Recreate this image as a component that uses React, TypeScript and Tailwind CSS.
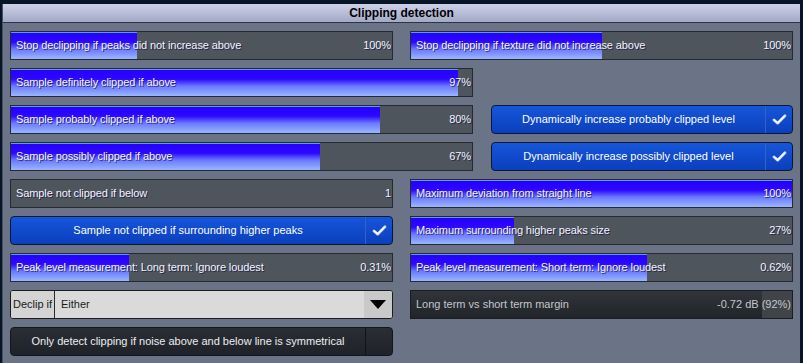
import React from 'react';

const FONT = "font-['Liberation_Sans',Arial,sans-serif]";

function Slider({ label, value, pct }: { label: string; value: string; pct: number }) {
  return (
    <div className="relative h-[29px] border border-[#262a30] bg-[#4f555c]">
      <div
        className="absolute inset-y-0 left-0 border-t border-[#5a9ee0] bg-[linear-gradient(to_bottom,#2400ff_0%,#2c08ff_35%,#6a78ff_62%,#9ab6ff_100%)]"
        style={{ width: `${pct}%` }}
      />
      <div className="relative flex h-full items-center justify-between pl-[5px] pr-[1px] text-[11px] tracking-[-0.1px] text-[#f4f4ff] [text-shadow:1px_1px_0_rgba(20,20,60,0.75)]">
        <span>{label}</span>
        <span>{value}</span>
      </div>
    </div>
  );
}

function Check() {
  return (
    <svg width="15" height="11" viewBox="0 0 16 12">
      <path d="M2 6.5 L6 10 L14 2" fill="none" stroke="#c9d9f5" strokeWidth="3" strokeLinecap="round" strokeLinejoin="round" />
      <path d="M2.5 6.5 L6 9.5 L13.5 2.2" fill="none" stroke="#ffffff" strokeWidth="1.4" strokeLinecap="round" strokeLinejoin="round" />
    </svg>
  );
}

function ToggleButton({ label }: { label: string }) {
  return (
    <div className="flex h-[29px] rounded-[4px] border border-[#0a1838] bg-gradient-to-b from-[#1656da] to-[#0b3fbc] text-[11px] text-white">
      <div className="flex flex-1 items-center justify-center">{label}</div>
      <div className="flex w-[27px] items-center justify-center border-l border-[#3562c4]">
        <Check />
      </div>
    </div>
  );
}

export default function App() {
  return (
    <div className={`h-[363px] w-[803px] overflow-hidden bg-[#061626] pl-[2px] pr-[3px] pt-[4px] ${FONT}`}>
      <div className="h-full border-l border-[#4a5062] bg-[#6b7387]">
        <div className="flex h-[19px] items-center justify-center border-b border-[#2e3444] bg-gradient-to-b from-[#cdd1e8] to-[#a3a9c6] text-[12px] font-bold text-black">
          Clipping detection
        </div>

        <div className="flex flex-col gap-[8px] pl-[7px] pr-[7px] pt-[8px]">
          <div className="grid grid-cols-2 gap-[17px]">
            <Slider label="Stop declipping if peaks did not increase above" value="100%" pct={33} />
            <Slider label="Stop declipping if texture did not increase above" value="100%" pct={50} />
          </div>

          <div className="grid grid-cols-[463px_1fr] gap-[18px]">
            <Slider label="Sample definitely clipped if above" value="97%" pct={97} />
            <div />
          </div>

          <div className="grid grid-cols-[463px_1fr] gap-[18px]">
            <Slider label="Sample probably clipped if above" value="80%" pct={80} />
            <ToggleButton label="Dynamically increase probably clipped level" />
          </div>

          <div className="grid grid-cols-[463px_1fr] gap-[18px]">
            <Slider label="Sample possibly clipped if above" value="67%" pct={67} />
            <ToggleButton label="Dynamically increase possibly clipped level" />
          </div>

          <div className="grid grid-cols-2 gap-[17px]">
            <Slider label="Sample not clipped if below" value="1" pct={0} />
            <Slider label="Maximum deviation from straight line" value="100%" pct={100} />
          </div>

          <div className="grid grid-cols-2 gap-[17px]">
            <ToggleButton label="Sample not clipped if surrounding higher peaks" />
            <Slider label="Maximum surrounding higher peaks size" value="27%" pct={27} />
          </div>

          <div className="grid grid-cols-2 gap-[17px]">
            <Slider label="Peak level measurement: Long term: Ignore loudest" value="0.31%" pct={31} />
            <Slider label="Peak level measurement: Short term: Ignore loudest" value="0.62%" pct={62} />
          </div>

          <div className="grid grid-cols-2 gap-[17px]">
            <div className="flex h-[29px] overflow-hidden rounded-[3px] border border-[#1c1c1c] bg-[#dadada] text-[11px] text-[#1a1a1a]">
              <div className="flex w-[44px] items-center justify-center border-r border-[#2a2a2a] bg-[#d4d4d4]">Declip if</div>
              <div className="flex flex-1 items-center pl-[6px]">Either</div>
              <div className="flex w-[28px] items-center justify-center bg-[#c9c9c9]">
                <svg width="16" height="9" viewBox="0 0 16 9">
                  <path d="M0 0 H16 L8 9 Z" fill="#000" />
                </svg>
              </div>
            </div>
            <div className="relative h-[29px] border border-[#1a1d21] bg-[#404449]">
              <div className="absolute inset-y-0 left-0 bg-gradient-to-b from-[#31353b] to-[#212429]" style={{ width: '92%' }} />
              <div className="relative flex h-full items-center justify-between pl-[5px] pr-[1px] text-[11px] text-[#c3c7cc]">
                <span>Long term vs short term margin</span>
                <span>-0.72 dB (92%)</span>
              </div>
            </div>
          </div>

          <div className="grid grid-cols-2 gap-[17px]">
            <div className="flex h-[29px] rounded-[4px] border border-[#13161a] bg-gradient-to-b from-[#2a2e35] to-[#1f2228] text-[11px] text-[#eceef2]">
              <div className="flex flex-1 items-center justify-center">Only detect clipping if noise above and below line is symmetrical</div>
              <div className="w-[27px] border-l border-[#111317]" />
            </div>
            <div />
          </div>
        </div>
      </div>
    </div>
  );
}
